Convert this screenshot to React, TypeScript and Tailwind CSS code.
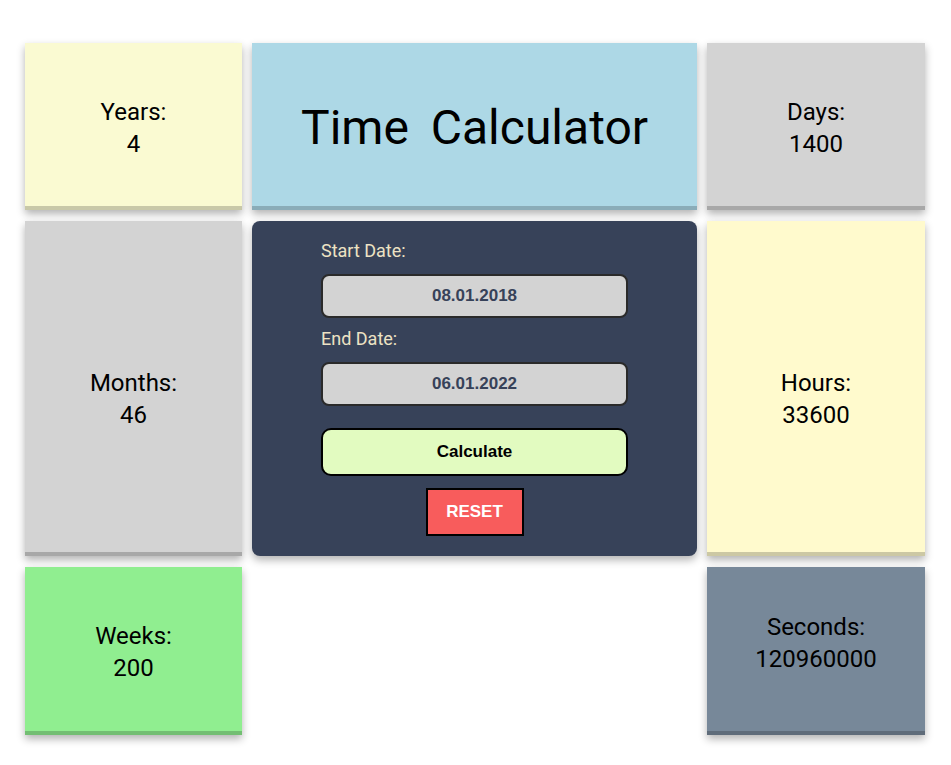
import React from 'react'

interface StatCardProps {
  label: string
  value: string
  className: string
}

function StatCard({ label, value, className }: StatCardProps) {
  return (
    <div
      className={`flex flex-col items-center justify-center border-b-4 border-black/20 text-[24px] leading-8 text-black shadow-[0_4px_8px_rgba(0,0,0,0.3)] ${className}`}
    >
      <span>{label}</span>
      <span>{value}</span>
    </div>
  )
}

export default function App() {
  return (
    <div className="min-h-[765px] bg-white font-['Roboto',sans-serif]">
      <div className="grid grid-cols-[217px_445px_218px] grid-rows-[167px_335px_168px] gap-x-[10px] gap-y-[11px] pl-[25px] pt-[43px]">
        <StatCard label="Years:" value="4" className="bg-[#fafad2] pt-1.5" />

        <div className="flex items-center justify-center border-b-4 border-black/20 bg-[#add8e6] pt-1.5 shadow-[0_4px_8px_rgba(0,0,0,0.3)]">
          <h1 className="text-[48px] leading-none text-black [word-spacing:10px]">
            Time Calculator
          </h1>
        </div>

        <StatCard label="Days:" value="1400" className="bg-[#d3d3d3] pt-1.5" />

        <StatCard label="Months:" value="46" className="bg-[#d3d3d3] pt-6" />

        {/* Date form */}
        <div className="flex flex-col items-center rounded-lg bg-[#374259] pt-[19px] shadow-[0_4px_8px_rgba(0,0,0,0.3)]">
          <div className="flex w-[307px] flex-col">
            <label className="text-[18px] leading-[22px] text-[#ede2c4]">Start Date:</label>
            <div className="mt-[12px] flex h-[44px] items-center justify-center rounded-lg border-2 border-[#2a2a2a] bg-[#d3d3d3] font-['Liberation_Sans',sans-serif] text-[17px] font-bold text-[#374259]">
              08.01.2018
            </div>
            <label className="mt-[10px] text-[18px] leading-[22px] text-[#ede2c4]">End Date:</label>
            <div className="mt-[12px] flex h-[44px] items-center justify-center rounded-lg border-2 border-[#2a2a2a] bg-[#d3d3d3] font-['Liberation_Sans',sans-serif] text-[17px] font-bold text-[#374259]">
              06.01.2022
            </div>
            <button className="mt-[22px] h-[48px] rounded-[10px] border-2 border-black bg-[#e2fbc0] font-['Liberation_Sans',sans-serif] text-[17px] font-bold text-black">
              Calculate
            </button>
          </div>
          <button className="mt-3 h-[48px] w-[98px] border-2 border-black bg-[#f85c5c] font-['Liberation_Sans',sans-serif] text-[17px] font-bold text-white">
            RESET
          </button>
        </div>

        <StatCard label="Hours:" value="33600" className="bg-[#fffacd] pt-6" />

        <StatCard label="Weeks:" value="200" className="bg-[#90ee90] pt-1.5" />
        <div />
        <StatCard label="Seconds:" value="120960000" className="bg-[#778899] pb-3" />
      </div>
    </div>
  )
}
